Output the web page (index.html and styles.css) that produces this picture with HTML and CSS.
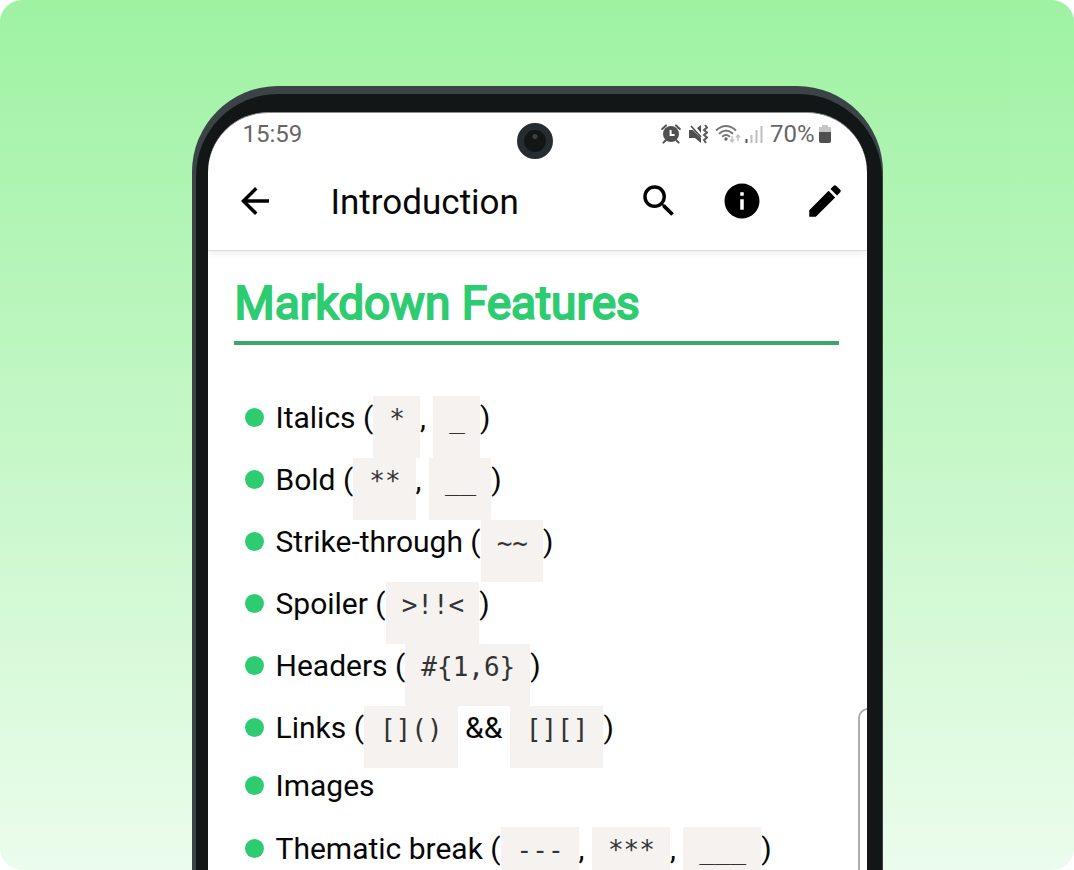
FILE: index.html
```html
<!DOCTYPE html>
<html lang="en">
<head>
<meta charset="utf-8">
<meta name="viewport" content="width=device-width, initial-scale=1">
<title>Introduction</title>
<link rel="stylesheet" href="styles.css">
</head>
<body>
<main class="stage">
  <div class="phone">
    <div class="bezel">
      <div class="screen">
        <div class="status">
          <span class="clock">15:59</span>
          <div class="indicators">
            <svg class="ind" width="20" height="20" viewBox="0 0 20 20" aria-label="Alarm">
              <path d="M1.200 5 5 1.400M18.800 5 15 1.400M5 16 2.400 18.600M15 16l2.600 2.600" fill="none" stroke="#555" stroke-width="2" stroke-linecap="round"/>
              <circle cx="10" cy="10" r="8" fill="#505050"/>
              <path d="M9.600 6v5h4" fill="none" stroke="#fff" stroke-width="2"/>
            </svg>
            <svg class="ind" width="20" height="20" viewBox="0 0 20 20" aria-label="Vibrate">
              <path d="M1 6h4l8 8v5l-6-5H1zM9 4l4-3v8z" fill="#505050"/>
              <path d="M3 2l10 11" stroke="#505050" stroke-width="1.600"/>
              <path d="M17 1l2 2.500-3 2.500 3 2.500-3 2.500 3 2.500-3 2.500 2 3" fill="none" stroke="#5a5a5a" stroke-width="2"/>
            </svg>
            <svg class="ind wifi" width="26" height="20" viewBox="0 0 26 20" aria-label="Wi-Fi">
              <g fill="none" stroke="#757575" stroke-width="2">
                <path d="M1 6.500Q11-2.500 21 6.500M4 9.700q7-6.500 14 0M7.200 12.700q3.800-3.500 7.600 0"/>
              </g>
              <circle cx="11" cy="15" r="1.700" fill="#666"/>
              <path d="M17 12v6m-2-2.500 2 2.500 2-2.500M23 17v-6m-2 2.500 2-2.500 2 2.500" fill="none" stroke="#c4c4c4" stroke-width="1.500"/>
            </svg>
            <svg class="ind signal" width="18" height="20" viewBox="0 0 18 20" aria-label="Signal">
              <path d="M1.500 15v4" stroke="#555" stroke-width="2"/>
              <path d="M6.500 11v8M11.500 6v13M16.500 2v17" stroke="#bdbdbd" stroke-width="2"/>
            </svg>
            <span class="percent">70%</span>
            <svg class="ind" width="14" height="20" viewBox="0 0 14 20" aria-label="Battery">
              <path d="M4 1h6v2h3v5H1V3h3z" fill="#c6c6c6"/>
              <path d="M1 8h12v9a2 2 0 0 1-2 2H3a2 2 0 0 1-2-2z" fill="#505050"/>
            </svg>
          </div>
        </div>
        <div class="camera"></div>
        <header class="appbar">
          <button class="action" type="button" aria-label="Back">
            <svg viewBox="0 0 24 24"><path d="M20 11H7.830l5.590-5.590L12 4l-8 8 8 8 1.410-1.410L7.830 13H20z"/></svg>
          </button>
          <h1 class="title">Introduction</h1>
          <div class="actions">
            <button class="action" type="button" aria-label="Search">
              <svg viewBox="0 0 24 24"><path d="M15.500 14h-.79l-.28-.27A6.471 6.471 0 0 0 16 9.500 6.500 6.500 0 1 0 9.500 16c1.610 0 3.090-.59 4.230-1.570l.27.28v.79l5 4.990L20.490 19zm-6 0C7.010 14 5 11.990 5 9.500S7.010 5 9.500 5 14 7.010 14 9.500 11.990 14 9.500 14"/></svg>
            </button>
            <button class="action" type="button" aria-label="Info">
              <svg viewBox="0 0 24 24"><path d="M12 2C6.480 2 2 6.480 2 12s4.480 10 10 10 10-4.480 10-10S17.520 2 12 2m1 15h-2v-6h2zm0-8h-2V7h2z"/></svg>
            </button>
            <button class="action" type="button" aria-label="Edit">
              <svg viewBox="0 0 24 24"><path d="M3 17.250V21h3.750L17.810 9.940l-3.750-3.750zM20.710 7.040a1 1 0 0 0 0-1.410l-2.340-2.340a1 1 0 0 0-1.410 0l-1.830 1.830 3.750 3.750z"/></svg>
            </button>
          </div>
        </header>
        <article class="document">
          <h2 class="heading">Markdown Features</h2>
          <ul class="features">
            <li>Italics (<code>*</code>, <code>_</code>)</li>
            <li>Bold (<code>**</code>, <code>__</code>)</li>
            <li>Strike-through (<code>~~</code>)</li>
            <li>Spoiler (<code>&gt;!!&lt;</code>)</li>
            <li>Headers (<code>#{1,6}</code>)</li>
            <li>Links (<code>[]()</code> &amp;&amp; <code>[][]</code>)</li>
            <li>Images</li>
            <li>Thematic break (<code>---</code>, <code>***</code>, <code>___</code>)</li>
          </ul>
        </article>
        <div class="edge-panel"></div>
      </div>
    </div>
  </div>
</main>
</body>
</html>
```
FILE: styles.css
```css
* {
  box-sizing: border-box;
}

body {
  margin: 0;
  background: #fff;
  color: #080808;
  font-family: Roboto, "Liberation Sans", sans-serif;
}

.stage {
  height: 100vh;
  padding: 86px 16px 0;
  overflow: hidden;
  border-radius: 22px;
  background: linear-gradient(#9ef2a2, #ebfcec);
}

.phone {
  max-width: 691px;
  margin: 0 auto;
  padding: 8px 1px 0 4px;
  border-radius: 86px 86px 0 0;
  background: #3b4347;
}

.bezel {
  padding: 18px 15px 0 12px;
  border-radius: 82px 84px 0 0;
  background: #121617;
}

.screen {
  position: relative;
  min-height: 100vh;
  overflow: hidden;
  border-top: 1px solid #8a8c8c;
  border-radius: 60px 60px 0 0;
  background: #fff;
}

.status {
  display: flex;
  justify-content: space-between;
  align-items: center;
  height: 42px;
  padding: 0 35px;
  color: #666;
  font-size: 24px;
  line-height: 28px;
}

.indicators {
  display: flex;
  align-items: center;
}

.ind {
  margin-right: 7px;
}

.ind:last-child {
  margin: 0 0 0 3px;
}

.wifi {
  margin-right: 4px;
}

.camera {
  position: absolute;
  top: 10px;
  left: 50%;
  width: 36px;
  height: 36px;
  margin-left: -20px;
  border: 7px solid #262d30;
  border-radius: 50%;
  background: radial-gradient(circle at 50% 30%, #3b4143 2px, #121617 3px);
}

.appbar {
  display: flex;
  align-items: center;
  height: 96px;
  padding: 0 21px 3px 26px;
  border-bottom: 1px solid #dcdcdc;
  box-shadow: 0 2px 8px #00000014;
  clip-path: inset(0 0 -12px);
}

.title {
  flex: 1;
  margin: 0;
  padding: 4px 0 0 55px;
  font-size: 35px;
  font-weight: 400;
  line-height: 40px;
}

.actions {
  display: flex;
  gap: 41px;
}

.action {
  width: 42px;
  height: 42px;
  padding: 0;
  border: 0;
  background: none;
}

.action svg {
  display: block;
  width: 100%;
  height: 100%;
}

.document {
  padding: 24px 28px 0 26px;
}

.heading {
  margin: 0;
  padding: 0 0 10px 1px;
  border-bottom: 4px solid #38a869;
  color: #2ecc71;
  font-size: 46px;
  font-weight: 400;
  line-height: 56px;
  -webkit-text-stroke: 2px #2ecc71;
}

.features {
  margin: 51px 0 0;
  padding: 0 0 0 42px;
  list-style: none;
  font-size: 30px;
  line-height: 36px;
}

.features li {
  min-height: 59px;
  white-space: nowrap;
}

.features li::before {
  content: "";
  display: inline-block;
  width: 19px;
  height: 19px;
  margin: 0 12px 0 -31px;
  border-radius: 50%;
  background: #2ecc71;
  vertical-align: 1px;
}

.features code {
  display: inline-block;
  height: 62px;
  padding: 0 15px 0 16px;
  background: #f5f2f0;
  color: #333;
  font-family: "DejaVu Sans Mono", monospace;
  font-size: 26px;
  line-height: 46px;
}

.edge-panel {
  position: absolute;
  top: 595px;
  right: -12px;
  bottom: -12px;
  width: 21px;
  border: 2px solid #adadad;
  border-radius: 10px;
  background: #fff;
}
```
